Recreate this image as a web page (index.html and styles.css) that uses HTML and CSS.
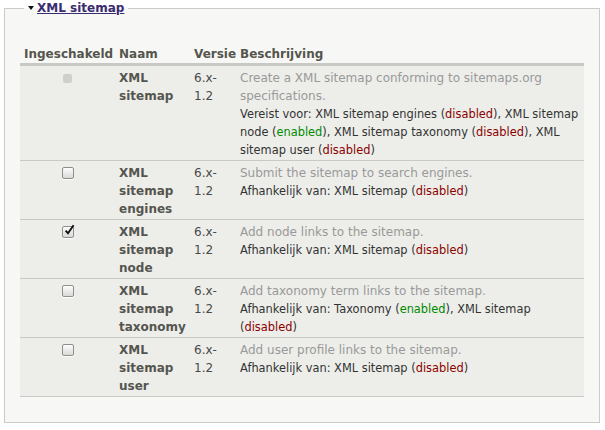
FILE: index.html
```html
<!DOCTYPE html>
<html lang="nl">
<head>
    <meta charset="UTF-8">
    <title>Modules</title>
    <link rel="stylesheet" href="styles.css">
</head>
<body>
    <fieldset class="module-group">
        <legend><a href="#" class="toggle">XML sitemap</a></legend>
        <table class="modules">
            <thead>
                <tr>
                    <th class="col-enabled">Ingeschakeld</th>
                    <th class="col-name">Naam</th>
                    <th class="col-version">Versie</th>
                    <th class="col-desc">Beschrijving</th>
                </tr>
            </thead>
            <tbody>
                <tr>
                    <td class="col-enabled"><span class="check disabled"></span></td>
                    <td class="col-name">XML sitemap</td>
                    <td class="col-version">6.x-1.2</td>
                    <td class="col-desc">
                        <div class="summary">Create a XML sitemap conforming to sitemaps.org specifications.</div>
                        <div class="requirements">Vereist voor: XML sitemap engines (<span class="off">disabled</span>), XML sitemap node (<span class="on">enabled</span>), XML sitemap taxonomy (<span class="off">disabled</span>), XML sitemap user (<span class="off">disabled</span>)</div>
                    </td>
                </tr>
                <tr>
                    <td class="col-enabled"><span class="check"></span></td>
                    <td class="col-name">XML sitemap engines</td>
                    <td class="col-version">6.x-1.2</td>
                    <td class="col-desc">
                        <div class="summary">Submit the sitemap to search engines.</div>
                        <div class="requirements">Afhankelijk van: XML sitemap (<span class="off">disabled</span>)</div>
                    </td>
                </tr>
                <tr>
                    <td class="col-enabled"><span class="check checked"><svg width="13" height="13" viewBox="0 0 13 13"><path d="M2.6 6.6 L5 9.2 L10.6 1.2" fill="none" stroke="#111" stroke-width="1.9"/></svg></span></td>
                    <td class="col-name">XML sitemap node</td>
                    <td class="col-version">6.x-1.2</td>
                    <td class="col-desc">
                        <div class="summary">Add node links to the sitemap.</div>
                        <div class="requirements">Afhankelijk van: XML sitemap (<span class="off">disabled</span>)</div>
                    </td>
                </tr>
                <tr>
                    <td class="col-enabled"><span class="check"></span></td>
                    <td class="col-name">XML sitemap taxonomy</td>
                    <td class="col-version">6.x-1.2</td>
                    <td class="col-desc">
                        <div class="summary">Add taxonomy term links to the sitemap.</div>
                        <div class="requirements">Afhankelijk van: Taxonomy (<span class="on">enabled</span>), XML sitemap (<span class="off">disabled</span>)</div>
                    </td>
                </tr>
                <tr>
                    <td class="col-enabled"><span class="check"></span></td>
                    <td class="col-name">XML sitemap user</td>
                    <td class="col-version">6.x-1.2</td>
                    <td class="col-desc">
                        <div class="summary">Add user profile links to the sitemap.</div>
                        <div class="requirements">Afhankelijk van: XML sitemap (<span class="off">disabled</span>)</div>
                    </td>
                </tr>
            </tbody>
        </table>
    </fieldset>
</body>
</html>
```

FILE: styles.css
```css
html {
    background: #fff;
}
body {
    margin: 0;
    font-family: "DejaVu Sans", Verdana, sans-serif;
    font-size: 12px;
    line-height: 18px;
    color: #494949;
}
.module-group {
    margin: 0 5px 0 4px;
    padding: 26px 15px 25px 15px;
    border: 1px solid #cbcbc8;
    background: #f7f8f6;
}
.module-group legend {
    padding: 0 4px 0 3px;
    margin-left: 4px;
    line-height: 16px;
    font-weight: bold;
}
.toggle {
    color: #3a2c70;
    text-decoration: underline;
}
.toggle::before {
    content: "";
    display: inline-block;
    border-left: 3.5px solid transparent;
    border-right: 3.5px solid transparent;
    border-top: 4px solid #111;
    margin: 0 3px 2px 1px;
    vertical-align: middle;
}
.modules {
    width: 564px;
    border-collapse: collapse;
    table-layout: fixed;
}
.modules th {
    text-align: left;
    padding: 3px 4px 0 4px;
    border-bottom: 3px solid #c8c9c5;
    color: #55554d;
}
.modules td {
    padding: 3px 4px 1px 4px;
    vertical-align: top;
    background: #edeeea;
    border-bottom: 1px solid #c9cac6;
}
.col-enabled {
    width: 87px;
}
td.col-enabled {
    text-align: center;
}
.col-name {
    width: 67px;
}
td.col-name {
    font-weight: bold;
    color: #555550;
}
.col-version {
    width: 38px;
}
.modules .col-desc {
    padding-right: 0;
}
.summary {
    color: #999;
}
.requirements {
    font-size: 11.4px;
    color: #333;
}
.off {
    color: #8b0000;
}
.on {
    color: #008a00;
}
.check {
    display: inline-block;
    width: 10px;
    height: 10px;
    margin-top: 3px;
    border: 1px solid #8e8e8c;
    border-radius: 2px;
    background: linear-gradient(#fdfdfd, #d9d9d7);
    box-shadow: 0 1px 0 #fff;
    vertical-align: top;
    position: relative;
}
.check svg {
    position: absolute;
    left: 0;
    top: -3px;
}
.check.disabled {
    width: 9px;
    height: 9px;
    margin-top: 5px;
    border: none;
    border-radius: 2px;
    background: #cfcfcc;
    box-shadow: none;
}
```
